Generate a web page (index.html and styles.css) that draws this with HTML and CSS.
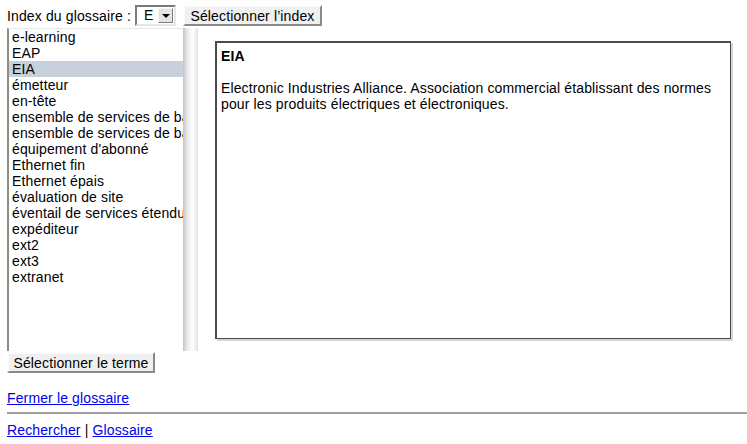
FILE: index.html
```html
<!DOCTYPE html>
<html lang="fr">
<head>
<meta charset="utf-8">
<title>Glossaire</title>
<link rel="stylesheet" href="styles.css">
</head>
<body>
<div class="page">
  <div class="toolbar">
    <span class="label">Index du glossaire :</span>
    <div class="select"><span class="select-value">E</span><span class="select-arrow"><span class="tri"></span></span></div>
    <button class="btn btn-index">Sélectionner l’index</button>
  </div>
  <div class="main">
    <div class="list">
      <div class="item">e-learning</div>
      <div class="item">EAP</div>
      <div class="item selected">EIA</div>
      <div class="item">émetteur</div>
      <div class="item">en-tête</div>
      <div class="item">ensemble de services de base</div>
      <div class="item">ensemble de services de base indépendant</div>
      <div class="item">équipement d'abonné</div>
      <div class="item">Ethernet fin</div>
      <div class="item">Ethernet épais</div>
      <div class="item">évaluation de site</div>
      <div class="item">éventail de services étendus</div>
      <div class="item">expéditeur</div>
      <div class="item">ext2</div>
      <div class="item">ext3</div>
      <div class="item">extranet</div>
    </div>
    <div class="strip"></div>
    <div class="pane">
      <div class="defbox">
        <div class="term">EIA</div>
        <p class="def">Electronic Industries Alliance. Association commercial établissant des normes pour les produits électriques et électroniques.</p>
      </div>
    </div>
  </div>
  <button class="btn btn-term">Sélectionner le terme</button>
  <p class="close"><a href="#">Fermer le glossaire</a></p>
  <hr class="rule">
  <p class="footer"><a href="#">Rechercher</a> | <a href="#">Glossaire</a></p>
</div>
</body>
</html>
```
FILE: styles.css
```css
html, body {
  margin: 0;
  padding: 0;
  background: #fff;
}
body {
  font-family: "Liberation Sans", Arial, sans-serif;
  font-size: 14px;
  line-height: 16px;
  letter-spacing: 0.13px;
  color: #000;
}
.page {
  padding: 5px 0 0 7px;
}
.toolbar {
  display: flex;
  align-items: center;
  height: 21px;
}
.label {
  width: 128px;
  white-space: nowrap;
}
.select {
  width: 41px;
  height: 21px;
  box-sizing: border-box;
  border: 2px solid;
  border-color: #7b7b7b #e6e6e6 #e6e6e6 #7b7b7b;
  background: #fff;
  display: flex;
  align-items: center;
  justify-content: space-between;
  padding: 0 1px 0 7px;
}
.select-value {
  line-height: 15px;
}
.select-arrow {
  width: 15px;
  height: 15px;
  box-sizing: border-box;
  background: #e4e4e4;
  border: 1px solid;
  border-color: #f4f4f4 #7b7b7b #7b7b7b #f4f4f4;
  display: flex;
  align-items: center;
  justify-content: center;
}
.tri {
  width: 0;
  height: 0;
  border-left: 4px solid transparent;
  border-right: 4px solid transparent;
  border-top: 4px solid #000;
}
.btn {
  font-family: "Liberation Sans", Arial, sans-serif;
  font-size: 14px;
  line-height: 16px;
  letter-spacing: 0.13px;
  height: 21px;
  box-sizing: border-box;
  background: #f0f0f0;
  color: #000;
  border: 2px solid;
  border-color: #fcfcfc #8a8a8a #8a8a8a #fcfcfc;
  padding: 0 2px;
  margin: 0;
  display: block;
  white-space: nowrap;
  text-align: center;
}
.btn-index {
  margin-left: 7px;
  width: 139px;
}
.main {
  display: flex;
  height: 323px;
  margin-top: 2px;
}
.list {
  width: 176px;
  box-sizing: border-box;
  border-left: 2px solid #8c8c8c;
  border-top: 1px solid #e8e8e8;
  overflow: hidden;
  background: #fff;
}
.item {
  white-space: nowrap;
  height: 16px;
  padding-left: 3px;
  overflow: hidden;
}
.item.selected {
  background: #c8d0dc;
}
.strip {
  width: 15px;
  background: linear-gradient(to right, #c4c4c4 0%, #e6e6e6 25%, #f8f8f8 50%, #ffffff 65%, #f0f0f0 85%, #dedede 100%);
}
.pane {
  flex: 1;
  background: #fff;
  padding: 13px 0 0 17px;
}
.defbox {
  width: 516px;
  height: 298px;
  box-sizing: border-box;
  border-top: 2px solid #4a4a4a;
  border-left: 2px solid #4a4a4a;
  border-right: 1px solid #4a4a4a;
  border-bottom: 1px solid #4a4a4a;
  box-shadow: 2px 2px 0 #d6d6d6;
  padding: 5px 4px;
}
.term {
  font-weight: bold;
}
.def {
  margin: 16px 0 0 0;
}
.btn-term {
  margin-top: 1px;
  width: 148px;
}
.close {
  margin: 17px 0 0 0;
}
a {
  color: #0000ee;
  text-decoration: underline;
}
.rule {
  margin: 6px 0 0 0;
  height: 0;
  border: 0;
  border-top: 2px solid #a0a0a0;
}
.footer {
  margin: 8px 0 0 0;
}
```
